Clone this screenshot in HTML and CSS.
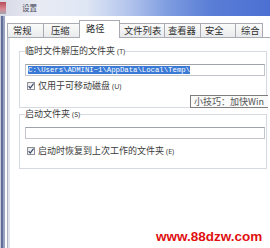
FILE: index.html
```html
<!DOCTYPE html>
<html lang="zh-CN">
<head>
<meta charset="utf-8">
<title>设置</title>
<link rel="stylesheet" href="styles.css">
</head>
<body>
<div class="titlebar">
  <span class="ticon"></span>
  <span class="ttext">设置</span>
</div>
<div class="main">
  <div class="frame"></div>
  <div class="dialog">
    <div class="tabs">
      <div class="tab t1">常规</div>
      <div class="tab t2">压缩</div>
      <div class="tab t3 active">路径</div>
      <div class="tab t4">文件列表</div>
      <div class="tab t5">查看器</div>
      <div class="tab t6">安全</div>
      <div class="tab t7">综合</div>
    </div>
    <div class="panel">
      <fieldset class="group g1">
        <legend>临时文件解压的文件夹 <span class="acc">(T)</span></legend>
        <div class="input"><span class="sel">C:\Users\ADMINI~1\AppData\Local\Temp\</span></div>
        <div class="check">
          <span class="box"><svg viewBox="0 0 8 8" width="8" height="8"><polyline points="1.6,4.2 3.2,6 6.6,1.6" fill="none" stroke="#3c4a6a" stroke-width="1.2"/></svg></span>
          <span class="ctext">仅用于可移动磁盘 <span class="acc">(U)</span></span>
        </div>
      </fieldset>
      <fieldset class="group g2">
        <legend>启动文件夹 <span class="acc">(S)</span></legend>
        <div class="input empty"></div>
        <div class="check">
          <span class="box"><svg viewBox="0 0 8 8" width="8" height="8"><polyline points="1.6,4.2 3.2,6 6.6,1.6" fill="none" stroke="#3c4a6a" stroke-width="1.2"/></svg></span>
          <span class="ctext">启动时恢复到上次工作的文件夹 <span class="acc">(E)</span></span>
        </div>
      </fieldset>
    </div>
  </div>
</div>
<div class="tooltip">小技巧：加快Win</div>
<div class="watermark">www.88dzw.com</div>
</body>
</html>
```

FILE: styles.css
```css
* { box-sizing: border-box; }
html, body { margin: 0; padding: 0; }
body {
  width: 270px;
  height: 248px;
  overflow: hidden;
  position: relative;
  background: #ffffff;
  font-family: "Noto Sans CJK SC", "Noto Sans", sans-serif;
  color: #3a3a3a;
}
.titlebar {
  height: 16px;
  display: flex;
  align-items: center;
  background: linear-gradient(to right, #d6d8e4 0, #e8ebf3 14%, #dfe6f4 32%, #b2c4ec 48%, #7e9ce0 62%, #5a7ed6 78%, #4b70d2 100%);
}
.ticon {
  width: 6px;
  height: 12px;
  flex: none;
  background: linear-gradient(#b84a5a, #d88a94 60%, #a0a4b0);
}
.ttext {
  margin-left: 16px;
  font-size: 7.5px;
  line-height: 10px;
  color: #4a4a5a;
}
.main {
  display: flex;
  height: 232px;
}
.frame {
  width: 7px;
  flex: none;
  background: linear-gradient(to right, #c8ccd8 0 1px, #5f6f9a 1px 3px, #9aa4c0 3px 5px, #fbfcfe 5px 7px);
}
.dialog {
  flex: 1;
  padding-top: 4px;
  min-width: 0;
}
.tabs {
  display: flex;
  align-items: flex-end;
  height: 17px;
  position: relative;
  z-index: 1;
}
.tab {
  height: 14px;
  border: 1px solid #a9abb2;
  border-bottom: none;
  margin-right: -1px;
  padding-left: 5px;
  background: linear-gradient(#fbfbfb, #e9eaec);
  font-size: 9.3px;
  line-height: 12px;
  color: #2e2e2e;
  white-space: nowrap;
  flex: none;
}
.t1 { width: 37px; }
.t2 { width: 37px; padding-left: 7px; }
.t3 { width: 41px; }
.t4 { width: 46px; padding-left: 4px; }
.t5 { width: 37px; padding-left: 3px; }
.t6 { width: 36px; padding-left: 4px; }
.t7 { width: 28px; padding-left: 5px; }
.tab.active {
  height: 18px;
  margin-bottom: -1px;
  background: #ffffff;
  line-height: 15px;
  padding-left: 6px;
  position: relative;
  z-index: 2;
}
.panel {
  height: 215px;
  border-top: 1px solid #a9abb2;
  border-left: 1px solid #b0b4c0;
  box-shadow: inset 2px 0 0 #e2e5ec;
  padding-left: 11px;
}
.group {
  width: 248px;
  margin: 0;
  padding: 0 1px 0 5px;
  border: 1px solid #d5d9e0;
  min-inline-size: 0;
}
.g1 { margin-top: 7px; padding-bottom: 15px; }
.g2 { margin-top: 0; padding-bottom: 11px; }
legend {
  padding: 0;
  font-size: 9px;
  line-height: 12px;
  color: #3a3a3a;
}
.acc {
  font-family: "Noto Sans", sans-serif;
  font-size: 7px;
}
.input {
  margin-top: 6px;
  height: 12px;
  border: 1px solid #c2c5cc;
  border-top-color: #9ea2aa;
  padding: 1px 2px;
  background: #ffffff;
  display: flex;
}
.sel {
  display: block;
  height: 8px;
  background: #3a7ad6;
  color: #ffffff;
  font-family: "Liberation Mono", monospace;
  font-size: 7.3px;
  line-height: 8px;
  white-space: nowrap;
}
.check {
  display: flex;
  align-items: center;
  height: 12px;
  margin-top: 4px;
}
.g2 .check { margin-top: 6px; }
.box {
  width: 8px;
  height: 8px;
  margin-left: 2px;
  flex: none;
  border: 1px solid #8e9096;
  background: linear-gradient(135deg, #e8e8ea, #ffffff);
  display: flex;
}
.box svg { display: block; margin: -1px; }
.ctext {
  margin-left: 3px;
  font-size: 9px;
  line-height: 12px;
  white-space: nowrap;
}
.tooltip {
  position: absolute;
  left: 190px;
  top: 95px;
  width: 78px;
  height: 13px;
  border: 1px solid #7d7d7d;
  border-right: none;
  background: #fafafa;
  padding-left: 3px;
  font-size: 9px;
  line-height: 11px;
  color: #555;
  white-space: nowrap;
}
.watermark {
  position: absolute;
  left: 156px;
  top: 229px;
  font-family: "Liberation Sans", Arial, sans-serif;
  font-weight: bold;
  font-size: 13.5px;
  line-height: 15px;
  color: #e01010;
  white-space: nowrap;
}
```
